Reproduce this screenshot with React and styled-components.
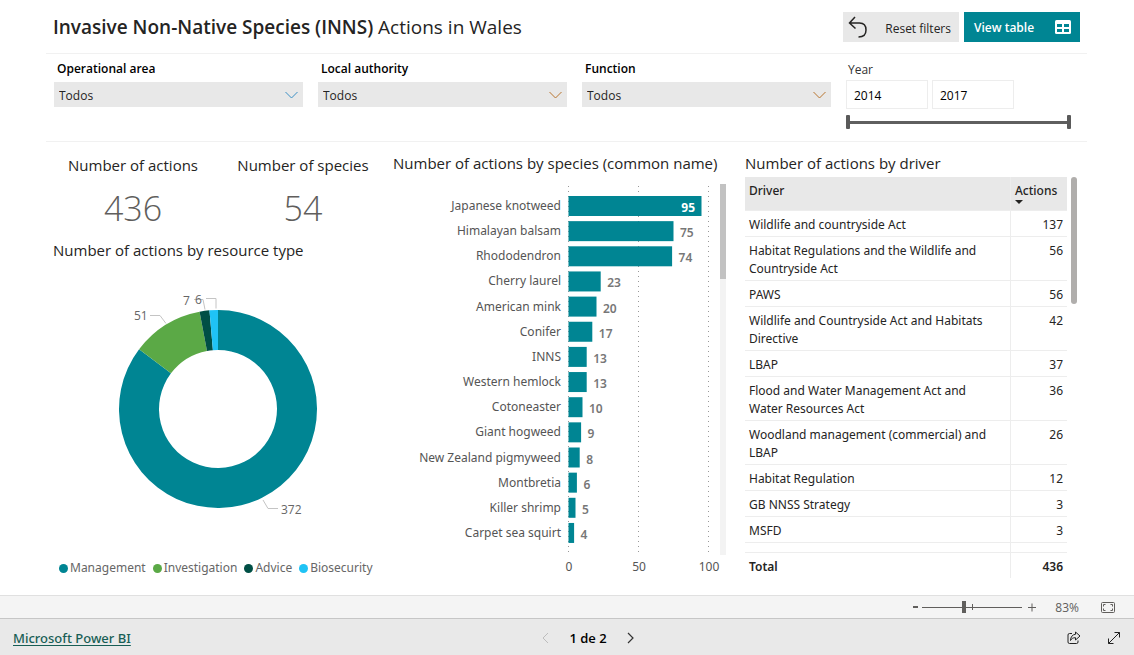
import React, { useState } from 'react';
import styled, { createGlobalStyle } from 'styled-components';

const GlobalStyle = createGlobalStyle`
  * {
    box-sizing: border-box;
  }
  body {
    margin: 0;
    background: #fff;
    color: #252423;
    font-family: 'Open Sans', 'Noto Sans', sans-serif;
    font-size: 13px;
  }
  button,
  input,
  select {
    font-family: inherit;
  }
`;

const teal = '#008593';
const wideFont = "'Noto Sans', 'Open Sans', sans-serif";

const PageStyles = styled.div`
  min-height: 100vh;
  display: flex;
  flex-direction: column;
`;

const Report = styled.main`
  flex: 1;
  display: flex;
  flex-direction: column;
  padding: 0 47px 0 46px;
`;

const Header = styled.header`
  display: flex;
  align-items: center;
  justify-content: space-between;
  height: 54px;
  padding: 0 7px;
  border-bottom: 1px solid #f1f1f1;
`;

const Title = styled.h1`
  margin: 0;
  font-size: 19px;
  line-height: 26px;
  font-weight: 400;

  strong {
    font-weight: 600;
  }
`;

const Actions = styled.div`
  display: flex;
  gap: 5px;
`;

const HeaderButton = styled.button`
  display: flex;
  align-items: center;
  justify-content: space-between;
  width: 116px;
  height: 30px;
  padding: ${(p) => (p.$primary ? '0 8px 0 10px' : '0 8px 0 4px')};
  border: 0;
  background: ${(p) => (p.$primary ? teal : '#e8e8e8')};
  color: ${(p) => (p.$primary ? '#fff' : '#252423')};
  font-size: 12px;
  font-weight: ${(p) => (p.$primary ? 600 : 400)};
  white-space: nowrap;
  cursor: pointer;

  span {
    padding-top: ${(p) => (p.$primary ? 2 : 4)}px;
  }
`;

const Filters = styled.section`
  display: grid;
  grid-template-columns: repeat(3, 1fr) 225px;
  column-gap: 15px;
  height: 88px;
  padding: 6px 16px 0 8px;
  border-bottom: 1px solid #f1f1f1;
`;

const Field = styled.div`
  label {
    display: block;
    padding: 0 3px;
    font-size: 12px;
    line-height: 18px;
    font-weight: 600;
    color: #000;
  }
`;

const SelectBox = styled.div`
  position: relative;
  margin-top: 4px;

  select {
    width: 100%;
    height: 25px;
    padding: 2px 5px 0;
    border: 0;
    border-radius: 0;
    appearance: none;
    background: #e8e8e8;
    color: #252423;
    font-size: 12px;
  }
  svg {
    position: absolute;
    right: 5px;
    top: 9px;
    pointer-events: none;
  }
`;

const YearField = styled.fieldset`
  min-width: 0;
  margin: 0;
  padding: 0;
  border: 0;

  legend {
    padding: 0 2px;
    font-size: 12px;
    line-height: 20px;
    color: #333;
  }
`;

const YearInputs = styled.div`
  display: flex;
  gap: 4px;

  input {
    width: 82px;
    height: 29px;
    padding: 2px 7px 0;
    border: 1px solid #ededed;
    color: #000;
    font-size: 12px;
  }
`;

const RangeTrack = styled.div`
  position: relative;
  height: 14px;
  margin-top: 6px;
  background: linear-gradient(#5f5f5f, #5f5f5f) center / 100% 3px no-repeat;

  input {
    position: absolute;
    inset: 0;
    width: 100%;
    height: 14px;
    margin: 0;
    appearance: none;
    background: none;
    pointer-events: none;
  }
  input::-webkit-slider-thumb {
    appearance: none;
    width: 4px;
    height: 14px;
    border-radius: 1px;
    background: #5a5a5a;
    pointer-events: auto;
  }
`;

const Visuals = styled.section`
  display: grid;
  grid-template-columns: 347fr 352fr 332fr;
  padding: 10px 10px 0 0;
`;

const Panel = styled.div`
  min-width: 0;
`;

const VisualTitle = styled.h2`
  margin: 0;
  font-size: 15px;
  line-height: 22px;
  font-weight: 500;
  white-space: nowrap;
`;

const Cards = styled.div`
  display: grid;
  grid-template-columns: 1fr 1fr;
  padding: 2px 5px 0 2px;
  text-align: center;
`;

const CardValue = styled.p`
  margin: 8px 0 0;
  font-size: 34px;
  line-height: 48px;
  font-weight: 300;
  color: #605e5c;
`;

const DonutPanel = styled.div`
  padding: 7px 0 0 7px;

  svg {
    display: block;
    width: 100%;
    margin-top: 2px;
  }
`;

const Legend = styled.ul`
  display: flex;
  gap: 7px;
  margin: 0;
  padding: 0 0 0 6px;
  list-style: none;
  font-family: ${wideFont};
  font-size: 12px;
  line-height: 18px;
  color: #666;
`;

const LegendItem = styled.li`
  display: flex;
  align-items: center;
  gap: 2px;

  &::before {
    content: '';
    width: 9px;
    height: 9px;
    border-radius: 50%;
    background: ${(p) => p.$color};
  }
`;

const ChartBody = styled.div`
  display: flex;
  align-items: flex-start;
  padding: 10px 19px 0 0;

  svg {
    flex: 1;
    min-width: 0;
    font-family: ${wideFont};
  }
`;

const ScrollBar = styled.div`
  flex: none;
  width: ${(p) => p.$width}px;
  height: ${(p) => p.$height}px;
  border-radius: ${(p) => (p.$round ? 3 : 0)}px;
  background: ${(p) => (p.$round ? 'none' : '#f3f3f3')};

  &::before {
    content: '';
    display: block;
    height: ${(p) => p.$thumb}px;
    border-radius: inherit;
    background: ${(p) => (p.$round ? '#b0aeac' : '#c2c2c2')};
  }
`;

const TableBody = styled.div`
  display: flex;
  align-items: flex-start;
  gap: 4px;
  padding-top: 3px;
`;

const Table = styled.table`
  flex: 1;
  border-collapse: separate;
  border-spacing: 0;
  table-layout: fixed;
  font-family: ${wideFont};
  font-size: 12px;
  line-height: 18px;

  th,
  td {
    padding: 5px 4px 2px;
    border-bottom: 1px solid #ededed;
    text-align: left;
    vertical-align: top;
    font-weight: 400;
  }
  td:first-child {
    padding-right: 14px;
  }
  th:last-child,
  td:last-child {
    width: 57px;
    border-left: 1px solid #ededed;
    text-align: right;
  }
  thead th {
    height: 34px;
    background: #e8e8e8;
    font-weight: 500;
  }
  thead th:last-child {
    text-align: left;
  }
  thead svg {
    display: block;
  }
  .gap td {
    height: 10px;
    padding: 0;
  }
  tfoot th,
  tfoot td {
    border-bottom: 0;
    font-weight: 600;
  }
`;

const ZoomBar = styled.div`
  display: flex;
  align-items: center;
  justify-content: flex-end;
  height: 24px;
  padding-right: 19px;
  border-top: 1px solid #e0e0e0;
  border-bottom: 1px solid #c6c6c6;
  background: #f4f4f4;
  color: #605e5c;
  font-size: 12px;
`;

const IconButton = styled.button`
  display: flex;
  align-items: center;
  justify-content: center;
  padding: 0;
  border: 0;
  background: none;
  color: ${(p) => p.$color || '#222'};
`;

const ZoomSlider = styled.div`
  position: relative;
  width: 100px;
  height: 12px;
  margin: 0 4px;
  background: linear-gradient(#605e5c, #605e5c) center / 100% 1px no-repeat;

  &::after {
    content: '';
    position: absolute;
    left: 50px;
    top: 3px;
    width: 1px;
    height: 6px;
    background: #605e5c;
  }
  input {
    display: block;
    width: 100%;
    height: 12px;
    margin: 0;
    appearance: none;
    background: none;
  }
  input::-webkit-slider-thumb {
    appearance: none;
    width: 4px;
    height: 12px;
    background: #605e5c;
  }
`;

const ZoomValue = styled.span`
  margin: 0 22px 0 18px;
`;

const Footer = styled.footer`
  display: grid;
  grid-template-columns: 1fr auto 1fr;
  align-items: center;
  height: 36px;
  padding: 2px 13px 0;
  background: #e9e9e9;

  a {
    font-family: ${wideFont};
    font-size: 13px;
    font-weight: 500;
    color: #185e55;
    text-underline-offset: 2px;
  }
`;

const Pager = styled.nav`
  display: flex;
  align-items: center;
  gap: 20px;
  padding-left: 42px;
  font-size: 13px;
  font-weight: 600;
  color: #000;
`;

const FooterIcons = styled.div`
  display: flex;
  justify-content: flex-end;
  gap: 26px;
`;

const species = [
  ['Japanese knotweed', 95],
  ['Himalayan balsam', 75],
  ['Rhododendron', 74],
  ['Cherry laurel', 23],
  ['American mink', 20],
  ['Conifer', 17],
  ['INNS', 13],
  ['Western hemlock', 13],
  ['Cotoneaster', 10],
  ['Giant hogweed', 9],
  ['New Zealand pigmyweed', 8],
  ['Montbretia', 6],
  ['Killer shrimp', 5],
  ['Carpet sea squirt', 4],
];

const drivers = [
  ['Wildlife and countryside Act', 137],
  ['Habitat Regulations and the Wildlife and Countryside Act', 56],
  ['PAWS', 56],
  ['Wildlife and Countryside Act and Habitats Directive', 42],
  ['LBAP', 37],
  ['Flood and Water Management Act and Water Resources Act', 36],
  ['Woodland management (commercial) and LBAP', 26],
  ['Habitat Regulation', 12],
  ['GB NNSS Strategy', 3],
  ['MSFD', 3],
];

const resources = [
  ['Management', 372, teal],
  ['Investigation', 51, '#5ba946'],
  ['Advice', 7, '#004f45'],
  ['Biosecurity', 6, '#1fc3f5'],
];

const filters = [
  ['area', 'Operational area', '#3a8fc4'],
  ['authority', 'Local authority', '#b8752e'],
  ['function', 'Function', '#b8752e'],
];

// Path of one ring slice, fractions run clockwise from the top
function slicePath(cx, cy, outer, inner, from, to) {
  const point = (r, t) => {
    const a = t * 2 * Math.PI;
    return `${cx + r * Math.sin(a)} ${cy - r * Math.cos(a)}`;
  };
  const large = to - from > 0.5 ? 1 : 0;
  return `M${point(outer, from)}A${outer} ${outer} 0 ${large} 1 ${point(outer, to)}L${point(inner, to)}A${inner} ${inner} 0 ${large} 0 ${point(inner, from)}Z`;
}

function Donut() {
  const total = resources.reduce((sum, r) => sum + r[1], 0);
  let start = 0;
  return (
    <svg viewBox='0 0 340 296' role='img' aria-label='Number of actions by resource type'>
      {resources.map(([name, value, color]) => {
        const from = start;
        start += value / total;
        return <path key={name} d={slicePath(165, 146, 99, 59, from, start)} fill={color} />;
      })}
      <g fill='none' stroke='#c4c4c4'>
        <path d='M97 52.500h10l6 8' />
        <path d='M141 36.500h9l2 10' />
        <path d='M153 35.500h10v10' />
        <path d='M210 237l5 8.500h10' />
      </g>
      <g fill='#666' fontSize='12' fontWeight='500'>
        <text x='81' y='57'>51</text>
        <text x='130' y='42'>7</text>
        <text x='142' y='41'>6</text>
        <text x='228' y='251'>372</text>
      </g>
    </svg>
  );
}

function SpeciesChart() {
  const left = 176;
  return (
    <svg viewBox='0 0 327 396' role='img' aria-label='Number of actions by species'>
      {[0, 50, 100].map((tick) => (
        <g key={tick}>
          <line
            x1={left + tick * 1.4 - 0.5}
            x2={left + tick * 1.4 - 0.5}
            y1='2'
            y2='372'
            stroke='#999'
            strokeDasharray='1 4'
          />
          <text x={left + tick * 1.4} y='387' fontSize='12' fill='#555' textAnchor='middle'>
            {tick}
          </text>
        </g>
      ))}
      {species.map(([name, value], i) => {
        const y = 12 + i * 25.15;
        const end = left + value * 1.4;
        const inside = value > 90;
        return (
          <g key={name} fontSize='12'>
            <rect x={left - 0.5} y={y} width={value * 1.4} height='20' fill={teal} />
            <text x={left - 8} y={Math.round(y + 14)} fill='#555' textAnchor='end'>
              {name}
            </text>
            <text
              x={inside ? end - 7 : end + 6}
              y={Math.round(y + 16)}
              fill={inside ? '#fff' : '#777'}
              fontWeight={inside ? 700 : 600}
              textAnchor={inside ? 'end' : 'start'}
            >
              {value}
            </text>
          </g>
        );
      })}
    </svg>
  );
}

function DriverTable() {
  return (
    <Table>
      <thead>
        <tr>
          <th scope='col'>Driver</th>
          <th scope='col'>
            Actions
            <svg width='8' height='4' viewBox='0 0 8 4'>
              <path d='M0 0h8L4 4z' fill='#252423' />
            </svg>
          </th>
        </tr>
      </thead>
      <tbody>
        {drivers.map(([name, count]) => (
          <tr key={name}>
            <td>{name}</td>
            <td>{count}</td>
          </tr>
        ))}
        <tr className='gap' aria-hidden='true'>
          <td />
          <td />
        </tr>
      </tbody>
      <tfoot>
        <tr>
          <th scope='row'>Total</th>
          <td>436</td>
        </tr>
      </tfoot>
    </Table>
  );
}

export default function App() {
  const [from, setFrom] = useState(2014);
  const [to, setTo] = useState(2017);
  const [zoom, setZoom] = useState(83);

  return (
    <PageStyles>
      <GlobalStyle />
      <Report>
        <Header>
          <Title>
            <strong>Invasive Non-Native Species (INNS)</strong> Actions in Wales
          </Title>
          <Actions>
            <HeaderButton type='button'>
              <svg width='22' height='24' viewBox='0 0 22 24' fill='none' stroke='#252423' strokeWidth='1.500'>
                <path d='M8 2L2.500 8L8.500 13.500M2.500 8H12.500C17 8 19 11 19 15C19 19.500 16 22 11.500 22' />
              </svg>
              <span>Reset filters</span>
            </HeaderButton>
            <HeaderButton type='button' $primary>
              <span>View table</span>
              <svg width='18' height='16' viewBox='0 0 18 16'>
                <rect x='1' y='1' width='16' height='14' rx='1.500' fill='#fff' />
                <path d='M3 5h5v3H3zM10 5h5v3h-5zM3 10h5v3H3zM10 10h5v3h-5z' fill={teal} />
              </svg>
            </HeaderButton>
          </Actions>
        </Header>

        <Filters>
          {filters.map(([id, label, color]) => (
            <Field key={id}>
              <label htmlFor={id}>{label}</label>
              <SelectBox>
                <select id={id}>
                  <option>Todos</option>
                </select>
                <svg width='13' height='8' viewBox='0 0 13 8' fill='none' stroke={color}>
                  <path d='M0.500 1L6.500 7L12.500 1' />
                </svg>
              </SelectBox>
            </Field>
          ))}
          <YearField>
            <legend>Year</legend>
            <YearInputs>
              <input aria-label='From year' value={from} onChange={(e) => setFrom(e.target.value)} />
              <input aria-label='To year' value={to} onChange={(e) => setTo(e.target.value)} />
            </YearInputs>
            <RangeTrack>
              <input
                type='range'
                aria-label='First year'
                min='2014'
                max='2017'
                value={from}
                onChange={(e) => setFrom(e.target.value)}
              />
              <input
                type='range'
                aria-label='Last year'
                min='2014'
                max='2017'
                value={to}
                onChange={(e) => setTo(e.target.value)}
              />
            </RangeTrack>
          </YearField>
        </Filters>

        <Visuals>
          <Panel>
            <Cards>
              <div>
                <VisualTitle>Number of actions</VisualTitle>
                <CardValue>436</CardValue>
              </div>
              <div>
                <VisualTitle>Number of species</VisualTitle>
                <CardValue>54</CardValue>
              </div>
            </Cards>
            <DonutPanel>
              <VisualTitle>Number of actions by resource type</VisualTitle>
              <Donut />
              <Legend>
                {resources.map(([name, , color]) => (
                  <LegendItem key={name} $color={color}>
                    {name}
                  </LegendItem>
                ))}
              </Legend>
            </DonutPanel>
          </Panel>

          <Panel>
            <VisualTitle>Number of actions by species (common name)</VisualTitle>
            <ChartBody>
              <SpeciesChart />
              <ScrollBar $width={6} $height={371} $thumb={95} />
            </ChartBody>
          </Panel>

          <Panel>
            <VisualTitle>Number of actions by driver</VisualTitle>
            <TableBody>
              <DriverTable />
              <ScrollBar $width={6} $height={380} $thumb={127} $round />
            </TableBody>
          </Panel>
        </Visuals>
      </Report>

      <ZoomBar>
        <IconButton type='button' aria-label='Zoom out' $color='#605e5c'>
          <svg width='5' height='10' viewBox='0 0 5 10'>
            <path d='M0 4h5v2H0z' fill='currentColor' />
          </svg>
        </IconButton>
        <ZoomSlider>
          <input
            type='range'
            aria-label='Zoom'
            min='0'
            max='200'
            value={zoom}
            onChange={(e) => setZoom(e.target.value)}
          />
        </ZoomSlider>
        <IconButton type='button' aria-label='Zoom in' $color='#605e5c'>
          <svg width='11' height='9' viewBox='0 0 11 9' stroke='currentColor'>
            <path d='M2 4.500h8M6 0.500v8' />
          </svg>
        </IconButton>
        <ZoomValue>{zoom}%</ZoomValue>
        <IconButton type='button' aria-label='Fit to page' $color='#605e5c'>
          <svg width='14' height='11' viewBox='0 0 14 11' fill='none' stroke='currentColor'>
            <rect x='0.500' y='0.500' width='13' height='10' rx='1' />
            <path d='M2.500 4.500v-2h2M9.500 2.500h2v2M11.500 6.500v2h-2M4.500 8.500h-2v-2' />
          </svg>
        </IconButton>
      </ZoomBar>

      <Footer>
        <div>
          <a href='https://powerbi.microsoft.com'>Microsoft Power BI</a>
        </div>
        <Pager aria-label='Pages'>
          <IconButton type='button' aria-label='Previous page' $color='#bdbdbd' disabled>
            <svg width='7' height='12' viewBox='0 0 7 12' fill='none' stroke='currentColor'>
              <path d='M6 1L1 6L6 11' />
            </svg>
          </IconButton>
          <span>1 de 2</span>
          <IconButton type='button' aria-label='Next page' $color='#333'>
            <svg width='7' height='12' viewBox='0 0 7 12' fill='none' stroke='currentColor' strokeWidth='1.200'>
              <path d='M1 1L6 6L1 11' />
            </svg>
          </IconButton>
        </Pager>
        <FooterIcons>
          <IconButton type='button' aria-label='Share'>
            <svg width='14' height='14' viewBox='0 0 14 14' fill='none' stroke='currentColor'>
              <path d='M5 2.500H2.500Q1 2.500 1 4V11Q1 12.500 2.500 12.500H9.500Q11 12.500 11 11V9.500' />
              <path d='M8.500 1L13 5L8.500 9V6.700C6 6.700 4.500 7.500 3.500 9.500C3.500 6 5.500 3.500 8.500 3.300Z' />
            </svg>
          </IconButton>
          <IconButton type='button' aria-label='Full screen'>
            <svg width='14' height='14' viewBox='0 0 14 14' fill='none' stroke='currentColor'>
              <path d='M1.500 12.500L12.500 1.500M7.500 1.500H12.500V6.500M1.500 7.500V12.500H6.500' />
            </svg>
          </IconButton>
        </FooterIcons>
      </Footer>
    </PageStyles>
  );
}
